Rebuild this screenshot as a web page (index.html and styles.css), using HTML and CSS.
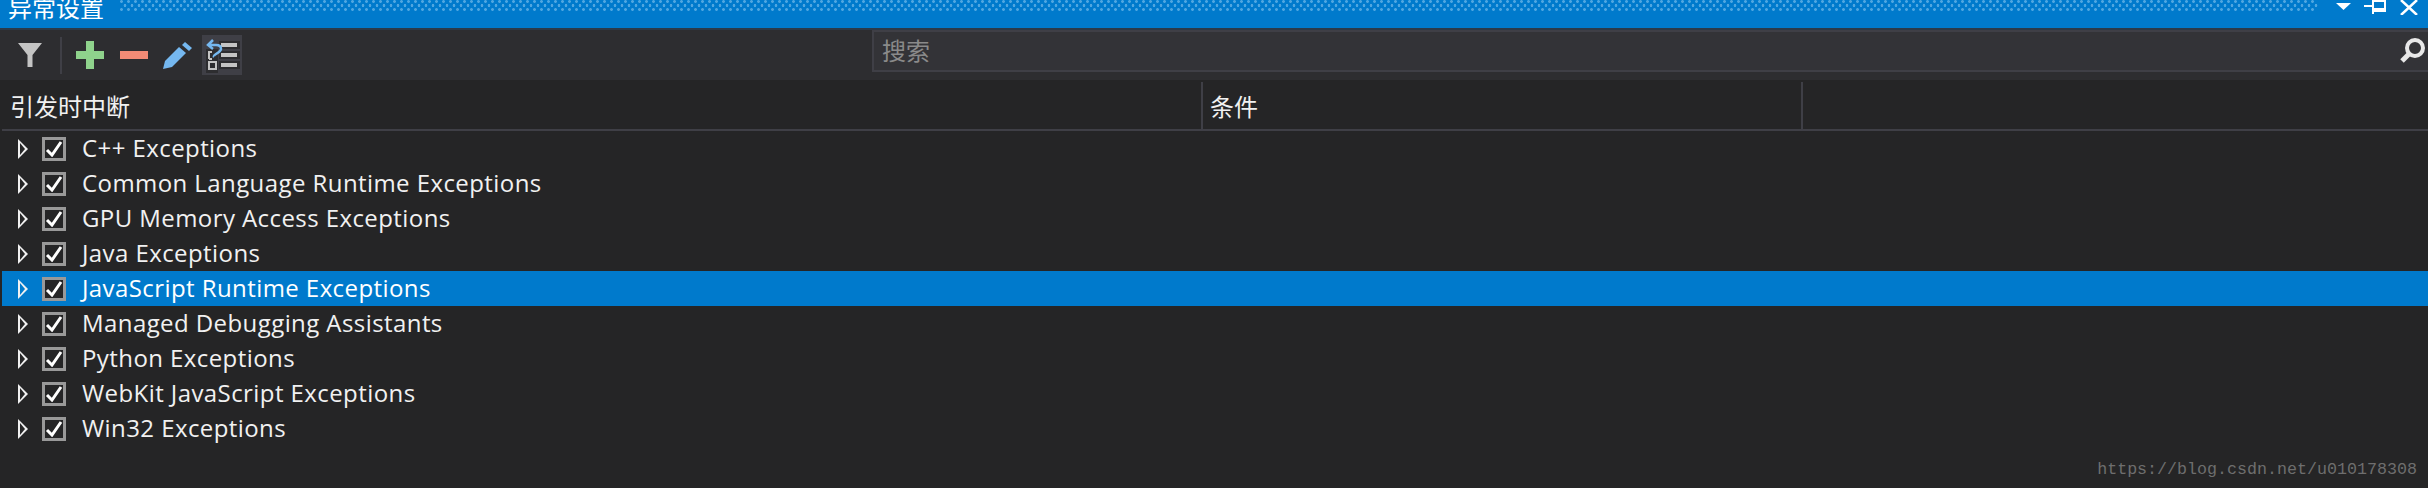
FILE: index.html
```html
<!DOCTYPE html>
<html lang="zh-CN">
<head>
    <meta charset="UTF-8">
    <title>异常设置</title>
    <link rel="stylesheet" href="styles.css">
</head>
<body>
    <div class="title-bar">
        <span class="title">异常设置</span>
        <div class="title-dots"></div>
        <div class="title-buttons">
            <svg class="btn-menu" width="15" height="7" viewBox="0 0 15 7"><path d="M0 0h15L7.500 7z" fill="#fff"/></svg>
            <svg class="btn-pin" width="22" height="14" viewBox="0 0 22 14" fill="none" stroke="#fff" stroke-width="2"><path d="M0 6h9M9 0v14M9 1h12v10H9M9 9h12"/></svg>
            <svg class="btn-close" width="18" height="15" viewBox="0 0 18 15" fill="none" stroke="#fff" stroke-width="2.500"><path d="M1 0l16 15M17 0L1 15"/></svg>
        </div>
    </div>

    <div class="toolbar">
        <div class="tool-icons">
            <svg width="24" height="24" viewBox="0 0 24 24"><path d="M0 0h24L14.500 12v12h-5V12z" fill="#c4c4c4"/></svg>
            <span class="tool-sep"></span>
            <svg width="28" height="28" viewBox="0 0 28 28"><path d="M10 0h8v10h10v8H18v10h-8V18H0v-8h10z" fill="#8fd28c"/></svg>
            <svg class="minus" width="28" height="8" viewBox="0 0 28 8"><path d="M0 0h28v8H0z" fill="#f38b76"/></svg>
            <svg class="pencil" width="29" height="27" viewBox="0 0 29 27"><path d="M0 27l2-8L16 5l7 6L9 25z" fill="#75b8f0"/><path d="M19 3l3-3 7 6-3 3z" fill="#75b8f0"/></svg>
            <div class="tool-toggle">
                <svg width="40" height="40" viewBox="0 0 40 40">
                    <path d="M17 6h21v8H17zM17 16h21v8H17zM17 26h21v8H17zM4 14h12v24H4z" fill="#2d2d30"/>
                    <path d="M19 8h16v4H19zM19 18h16v4H19zM19 28h16v4H19z" fill="#c4c4c4"/>
                    <path d="M7 27h7v7H7z" fill="none" stroke="#c4c4c4" stroke-width="2"/>
                    <path d="M7 24v-7h3M7 24h3" fill="none" stroke="#c4c4c4" stroke-width="2"/>
                    <path d="M11 5L6 10l5 4M7 10h7c4 0 5 2 5 4s-2 3-5 5-2 3-2 3" fill="none" stroke="#75b8f0" stroke-width="2.500"/>
                </svg>
            </div>
        </div>
        <div class="search-box">
            <span class="search-hint">搜索</span>
            <svg width="26" height="26" viewBox="0 0 26 26" fill="none" stroke="#e8e8e8"><circle cx="16" cy="10" r="8" stroke-width="4"/><path d="M10 16L3 23" stroke-width="5"/></svg>
        </div>
    </div>

    <div class="grid-header">
        <div class="col col-break">引发时中断</div>
        <div class="col col-cond">条件</div>
        <div class="col col-rest"></div>
    </div>

    <div class="rows">
        <div class="row"><i class="arrow"></i><span class="check"><svg width="18" height="16" viewBox="0 0 18 16"><path d="M2 9l5 5L16 1" fill="none" stroke="#fff" stroke-width="3"/></svg></span><span>C++ Exceptions</span></div>
        <div class="row"><i class="arrow"></i><span class="check"><svg width="18" height="16" viewBox="0 0 18 16"><path d="M2 9l5 5L16 1" fill="none" stroke="#fff" stroke-width="3"/></svg></span><span>Common Language Runtime Exceptions</span></div>
        <div class="row"><i class="arrow"></i><span class="check"><svg width="18" height="16" viewBox="0 0 18 16"><path d="M2 9l5 5L16 1" fill="none" stroke="#fff" stroke-width="3"/></svg></span><span>GPU Memory Access Exceptions</span></div>
        <div class="row"><i class="arrow"></i><span class="check"><svg width="18" height="16" viewBox="0 0 18 16"><path d="M2 9l5 5L16 1" fill="none" stroke="#fff" stroke-width="3"/></svg></span><span>Java Exceptions</span></div>
        <div class="row selected"><i class="arrow"></i><span class="check"><svg width="18" height="16" viewBox="0 0 18 16"><path d="M2 9l5 5L16 1" fill="none" stroke="#fff" stroke-width="3"/></svg></span><span>JavaScript Runtime Exceptions</span></div>
        <div class="row"><i class="arrow"></i><span class="check"><svg width="18" height="16" viewBox="0 0 18 16"><path d="M2 9l5 5L16 1" fill="none" stroke="#fff" stroke-width="3"/></svg></span><span>Managed Debugging Assistants</span></div>
        <div class="row"><i class="arrow"></i><span class="check"><svg width="18" height="16" viewBox="0 0 18 16"><path d="M2 9l5 5L16 1" fill="none" stroke="#fff" stroke-width="3"/></svg></span><span>Python Exceptions</span></div>
        <div class="row"><i class="arrow"></i><span class="check"><svg width="18" height="16" viewBox="0 0 18 16"><path d="M2 9l5 5L16 1" fill="none" stroke="#fff" stroke-width="3"/></svg></span><span>WebKit JavaScript Exceptions</span></div>
        <div class="row"><i class="arrow"></i><span class="check"><svg width="18" height="16" viewBox="0 0 18 16"><path d="M2 9l5 5L16 1" fill="none" stroke="#fff" stroke-width="3"/></svg></span><span>Win32 Exceptions</span></div>
    </div>

    <div class="watermark">https://blog.csdn.net/u010178308</div>
</body>
</html>
```

FILE: styles.css
```css
html, body {
    height: 488px;
    overflow: hidden;
}

body {
    margin: 0;
    background: #252526;
    color: #f1f1f1;
    font-family: "Open Sans", "Noto Sans CJK SC", sans-serif;
    display: flex;
    flex-direction: column;
}

/* title bar */
.title-bar {
    height: 28px;
    background: #007acc;
    border-bottom: 2px solid #2b3a4a;
    display: flex;
    align-items: flex-end;
    overflow: hidden;
    flex-shrink: 0;
}

.title {
    margin: 0 0 4px 8px;
    font-size: 24px;
    line-height: 34px;
    color: #fff;
    font-family: "Noto Sans CJK SC", sans-serif;
    white-space: nowrap;
}

.title-dots {
    flex: 1;
    align-self: flex-start;
    height: 12px;
    margin: 0 2px 0 16px;
    background-image:
        radial-gradient(circle at 1.500px 1.500px, #4fa6e0 1.200px, transparent 1.600px),
        radial-gradient(circle at 5px 5.500px, #4fa6e0 1.200px, transparent 1.600px);
    background-size: 7px 8px;
}

.title-buttons {
    width: 108px;
    height: 28px;
    padding-left: 16px;
    box-sizing: border-box;
    display: flex;
    align-items: flex-start;
    flex-shrink: 0;
}

.btn-menu {
    margin-top: 3px;
}

.btn-pin {
    margin-left: 13px;
}

.btn-close {
    margin-left: 14px;
}

/* toolbar */
.toolbar {
    height: 50px;
    background: #2d2d30;
    display: flex;
    flex-shrink: 0;
}

.tool-icons {
    width: 872px;
    padding-left: 18px;
    box-sizing: border-box;
    display: flex;
    align-items: center;
}

.tool-sep {
    width: 2px;
    height: 37px;
    margin: 0 14px 0 18px;
    background: #3f3f46;
}

.minus {
    margin-left: 16px;
}

.pencil {
    margin-left: 15px;
}

.tool-toggle {
    width: 40px;
    height: 40px;
    margin-left: 10px;
    background: #3f3f46;
}

.search-box {
    flex: 1;
    height: 42px;
    background: #333337;
    border: solid #3f3f46;
    border-width: 2px 0 2px 2px;
    box-sizing: border-box;
    display: flex;
    align-items: center;
    justify-content: space-between;
    padding: 0 3px 0 8px;
}

.search-hint {
    font-family: "Noto Sans CJK SC", sans-serif;
    font-size: 24px;
    line-height: 34px;
    margin-bottom: 2px;
    color: #8a8a8a;
}

/* column headers */
.grid-header {
    height: 51px;
    margin-left: 2px;
    box-sizing: border-box;
    border-bottom: 2px solid #3f3f46;
    display: flex;
    flex-shrink: 0;
}

.col {
    font-family: "Noto Sans CJK SC", sans-serif;
    font-size: 24px;
    line-height: 36px;
    padding: 6px 0 0 8px;
    box-sizing: border-box;
    border-right: 2px solid #3f3f46;
    margin-top: 2px;
}

.col-break {
    width: 1201px;
}

.col-cond {
    width: 600px;
    padding-left: 7px;
}

.col-rest {
    flex: 1;
    border-right: none;
}

/* tree rows */
.rows {
    margin-left: 2px;
}

.row {
    height: 35px;
    display: flex;
    align-items: center;
    font-size: 24px;
    letter-spacing: 0.42px;
    line-height: 33px;
    white-space: nowrap;
    color: #f1f1f1;
}

.row.selected {
    background: #007acc;
    color: #fff;
}

.arrow {
    width: 0;
    height: 0;
    margin-left: 16px;
    border-left: 10px solid #f1f1f1;
    border-top: 10px solid transparent;
    border-bottom: 10px solid transparent;
    position: relative;
}

.arrow::after {
    content: "";
    position: absolute;
    left: -8px;
    top: -6px;
    border-left: 5px solid #252526;
    border-top: 6px solid transparent;
    border-bottom: 6px solid transparent;
}

.selected .arrow::after {
    border-left-color: #007acc;
}

.check {
    width: 24px;
    height: 24px;
    margin: 0 16px 0 14px;
    box-sizing: border-box;
    border: 3px solid #999;
    background: #252526;
    display: flex;
    align-items: center;
    justify-content: center;
}

.row > span:last-child {
    margin-bottom: 3px;
}

.watermark {
    position: absolute;
    right: 11px;
    top: 458px;
    font-family: "Liberation Mono", monospace;
    font-size: 16.670px;
    line-height: 24px;
    color: #6e6e6e;
}
```
